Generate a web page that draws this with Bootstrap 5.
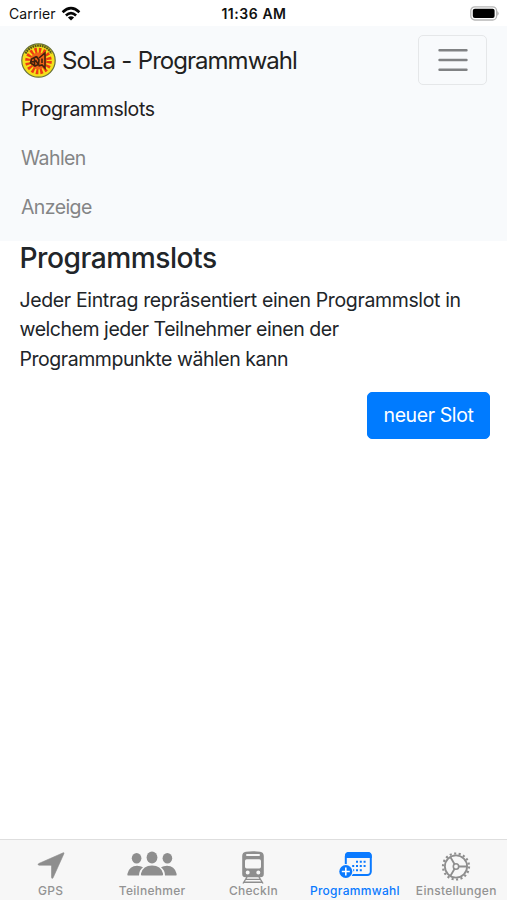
<!DOCTYPE html>
<html lang="de">
<head>
<meta charset="utf-8">
<meta name="viewport" content="width=device-width, initial-scale=1">
<title>SoLa - Programmwahl</title>
<link href="https://cdn.jsdelivr.net/npm/bootstrap@5.3.0/dist/css/bootstrap.min.css" rel="stylesheet">
<style>
body{font-family:Inter,"Liberation Sans",sans-serif;font-size:19.5px;line-height:29.4px;color:#212529;letter-spacing:-.36px;height:900px;overflow:hidden}
svg{display:block;flex:none}
.status{height:26px;font-size:14px;line-height:26px;padding:1px 8px 0 9px;letter-spacing:.1px;color:#111}
.status>*{flex:1 1 0}
.status .clock{font-weight:600;letter-spacing:.55px}
.status .wifi{margin-left:5px}
.app-nav{background:#f8fafc;height:215px;padding:9px 20px 0 21px}
.app-nav .navbar-brand{font-size:24px;line-height:37px;padding:0;margin:0;gap:6px;color:#212121;letter-spacing:-.97px;word-spacing:.6px}
.app-nav .navbar-toggler{width:69px;height:50px;padding:0;border:1.5px solid #e5e7e9;border-radius:5px}
.app-nav .nav-link{padding:9.8px 0;line-height:29.4px;color:#848586;letter-spacing:-.6px}
.app-nav .nav-link.active{color:#1f2021;letter-spacing:-.4px}
.content{padding:0 17px 0 19.5px}
.content h1{font-size:28.2px;line-height:35px;font-weight:500;margin:0 0 10px;letter-spacing:-.5px}
.content p{margin:0 0 18px}
.content .tight{letter-spacing:-.46px}
.btn-slot{--bs-btn-bg:#007bff;--bs-btn-border-color:#007bff;font-size:19.5px;line-height:29.4px;height:47px;width:123px;padding:0;border-radius:5px;letter-spacing:-.4px}
.tabs{height:61px;background:#f7f7f7;border-top:1.5px solid #dedede;color:#939393;font-size:12px;line-height:16px;font-weight:500;letter-spacing:.28px}
.tabs a{width:20%;color:inherit;text-decoration:none;padding-top:9px;white-space:nowrap}
.tabs a.active{color:#0a7aff}
.tabs svg{height:35px;margin-bottom:-1px}
</style>
<script defer src="https://cdn.jsdelivr.net/npm/bootstrap@5.3.0/dist/js/bootstrap.bundle.min.js"></script>
</head>
<body class="d-flex flex-column bg-white">
<div class="status d-flex align-items-center">
  <div class="d-flex align-items-center"><span>Carrier</span>
    <svg class="wifi" width="20" height="16" viewBox="0 0 20 16" fill="none" stroke="#050505" stroke-width="2.6"><path d="M1.6 6.2Q10-1.8 18.4 6.2M4.9 9.5Q10 4.7 15.1 9.5"/><path d="M10 14.6L6.9 11.5Q10 8.9 13.1 11.5Z" fill="#050505" stroke="none"/></svg>
  </div>
  <div class="clock text-center"><span>11:36 AM</span></div>
  <div class="d-flex justify-content-end">
    <svg width="29" height="15" viewBox="0 0 29 15"><rect x=".8" y=".8" width="25.8" height="13.2" rx="4" fill="#fff" stroke="#b6b6b6" stroke-width="1.3"/><rect x="2.8" y="2.8" width="21.8" height="9.2" rx="2" fill="#000"/><path d="M27.3 5Q30 7.4 27.3 9.8Z" fill="#aaa"/></svg>
  </div>
</div>
<nav class="app-nav">
  <div class="d-flex justify-content-between align-items-center">
    <a class="navbar-brand d-flex align-items-center" href="#">
      <svg width="35" height="35" viewBox="0 0 35 35"><circle cx="17.5" cy="17.5" r="16.7" fill="#f4e01c" stroke="#68713b" stroke-width="1.2"/><path d="M4.5 10.5A14.7 14.7 0 0 1 30.5 10.5" fill="none" stroke="#545817" stroke-width="2.2" stroke-dasharray="1.8 .6"/><circle cx="17.5" cy="18" r="9.8" fill="none" stroke="#ed3b12" stroke-width="7" stroke-dasharray="2.2 1.65"/><circle cx="17.5" cy="18" r="8.4" fill="#ef6418"/><path d="M15.5 13.5L10.5 16L9.5 20L14 23L17.5 21.5L15 18L10.5 19M15.5 13.5L18 17L17.5 21.5M18 15L24 10V25L21 22L17.5 23M13.5 15.5V22M21 15.5V20" fill="none" stroke="#41220d" stroke-width="1.6"/></svg>
      <span>SoLa - Programmwahl</span>
    </a>
    <button class="navbar-toggler d-flex align-items-center justify-content-center" type="button" aria-label="Menü">
      <svg width="30" height="26" viewBox="0 0 30 26" stroke="#808284" stroke-width="2.4" stroke-linecap="round"><path d="M1.5 3.2H28.5M1.5 13H28.5M1.5 22.8H28.5"/></svg>
    </button>
  </div>
  <div class="navbar-nav">
    <a class="nav-link active" href="#">Programmslots</a>
    <a class="nav-link" href="#">Wahlen</a>
    <a class="nav-link" href="#">Anzeige</a>
  </div>
</nav>
<main class="content flex-grow-1">
  <h1>Programmslots</h1>
  <p>Jeder Eintrag repräsentiert einen Programmslot in<br><span class="tight">welchem jeder Teilnehmer einen der<br>Programmpunkte wählen kann</span></p>
  <div class="d-flex justify-content-end"><button class="btn btn-primary btn-slot" type="button">neuer Slot</button></div>
</main>
<footer class="tabs d-flex">
  <a href="#" class="d-flex flex-column align-items-center"><svg width="28" viewBox="0 0 28 35"><path d="M26.2 3.8Q27.4 3.4 26.9 4.7L16.2 28.5Q15.2 30.5 14.5 28.4V17.4Q14.5 16.2 13.3 16.2H2Q0 15.6 1.8 14.5Z" fill="#8e8e8e" stroke="#8e8e8e" stroke-width=".6"/></svg><span>GPS</span></a>
  <a href="#" class="d-flex flex-column align-items-center"><svg width="50" viewBox="0 0 50 35" fill="#8e8e8e"><ellipse cx="9.6" cy="9.3" rx="4.8" ry="5.2"/><ellipse cx="40.4" cy="9.3" rx="4.8" ry="5.2"/><ellipse cx="25" cy="8.5" rx="5.4" ry="5.9"/><path d="M14.8 26.5Q13.5 26.5 14 24.5Q16 16.5 25 16.5T36 24.5Q36.5 26.5 35.2 26.5ZM.8 26.5Q0 26.5.5 24.4Q2.5 16.7 10 16.7Q13.7 16.7 16 18.2Q12 21.3 12 26.5ZM49.2 26.5Q50 26.5 49.5 24.4Q47.5 16.7 40 16.7Q36.3 16.7 34 18.2Q38 21.3 38 26.5Z"/></svg><span>Teilnehmer</span></a>
  <a href="#" class="d-flex flex-column align-items-center"><svg width="24" viewBox="0 0 24 35"><path fill="#8e8e8e" fill-rule="evenodd" d="M5 2.7Q12 1.8 19 2.7Q22.8 3.3 22.8 7V25Q22.8 28.2 19.5 28.2H4.5Q1.2 28.2 1.2 25V7Q1.2 3.3 5 2.7ZM6 5.1Q5 5.1 5 6T6 6.9H18Q19 6.9 19 6T18 5.1ZM5.7 10.2Q4 10.2 4 11.9V17.7Q4 19.4 5.7 19.4H18.3Q20 19.4 20 17.7V11.9Q20 10.2 18.3 10.2ZM6.7 21.6a2 2 0 1 0 0 4a2 2 0 1 0 0-4ZM17.3 21.6a2 2 0 1 0 0 4a2 2 0 1 0 0-4Z"/><path d="M6 28L2 34.5M18 28L22 34.5M5 30.4H19M3.5 33.3H20.5" stroke="#8e8e8e" stroke-width="1.4"/></svg><span>CheckIn</span></a>
  <a href="#" class="active d-flex flex-column align-items-center"><svg width="34" viewBox="0 0 34 35"><rect x="7.8" y="4" width="25" height="22" rx="3.5" fill="#f7f7f7" stroke="#0a7aff" stroke-width="2"/><path d="M7 9V6.5Q7 3 10.5 3H30Q33.7 3 33.7 6.5V9Z" fill="#0a7aff"/><path d="M18 12.8H29M14.2 17H29M14.2 21.2H25" stroke="#0a7aff" stroke-width="2" stroke-dasharray="2 1.8"/><circle cx="7.8" cy="22.5" r="7.6" fill="#f7f7f7"/><circle cx="7.8" cy="22.5" r="6.5" fill="#0a7aff"/><path d="M7.8 18.5V26.5M3.8 22.5H11.8" stroke="#fff" stroke-width="1.6"/></svg><span>Programmwahl</span></a>
  <a href="#" class="d-flex flex-column align-items-center"><svg width="30" viewBox="0 0 30 35" fill="none" stroke="#8e8e8e"><circle cx="15" cy="17.5" r="11.1" stroke-width="1.8"/><circle cx="15" cy="17.5" r="13" stroke-width="2.2" stroke-dasharray="2.1 2.438" /><circle cx="15" cy="17.5" r="2.7" stroke-width="1.6"/><path d="M17.7 17.5H26M13.6 15.2L9.5 8.2M13.6 19.8L9.5 26.8" stroke-width="1.8"/></svg><span>Einstellungen</span></a>
</footer>
</body>
</html>
